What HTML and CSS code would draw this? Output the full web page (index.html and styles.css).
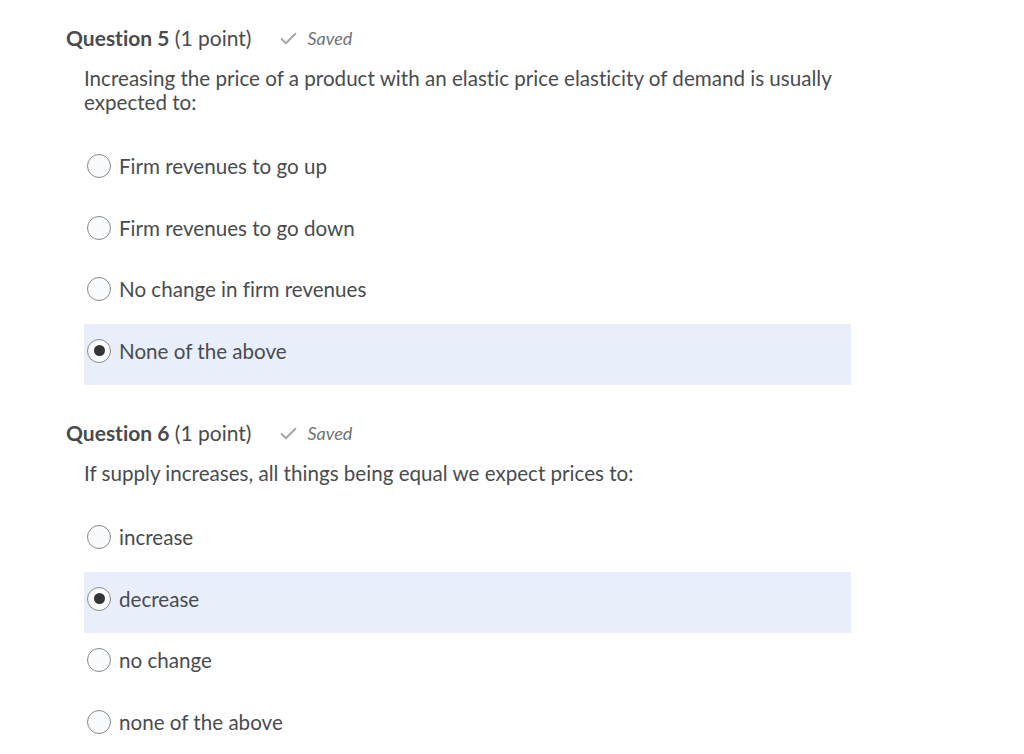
FILE: index.html
```html
<!DOCTYPE html>
<html lang="en">
<head>
<meta charset="utf-8">
<title>Quiz</title>
<link rel="stylesheet" href="styles.css">
</head>
<body>
<main class="quiz">
  <section class="question">
    <h2 class="q-head"><span class="q-title"><b>Question 5</b> (1 point)</span><span class="saved"><svg class="check" viewBox="0 0 16 16" width="17" height="17"><path d="M1.5 8.5 L5.5 12.5 L14.5 3.5" fill="none" stroke="#a3a6a9" stroke-width="1.8" stroke-linecap="round" stroke-linejoin="round"/></svg><i>Saved</i></span></h2>
    <p class="q-text">Increasing the price of a product with an elastic price elasticity of demand is usually expected to:</p>
    <ul class="options">
      <li class="option"><span class="radio"></span><span class="label">Firm revenues to go up</span></li>
      <li class="option"><span class="radio"></span><span class="label">Firm revenues to go down</span></li>
      <li class="option"><span class="radio"></span><span class="label">No change in firm revenues</span></li>
      <li class="option selected"><span class="radio checked"></span><span class="label">None of the above</span></li>
    </ul>
  </section>
  <section class="question">
    <h2 class="q-head"><span class="q-title"><b>Question 6</b> (1 point)</span><span class="saved"><svg class="check" viewBox="0 0 16 16" width="17" height="17"><path d="M1.5 8.5 L5.5 12.5 L14.5 3.5" fill="none" stroke="#a3a6a9" stroke-width="1.8" stroke-linecap="round" stroke-linejoin="round"/></svg><i>Saved</i></span></h2>
    <p class="q-text">If supply increases, all things being equal we expect prices to:</p>
    <ul class="options">
      <li class="option"><span class="radio"></span><span class="label">increase</span></li>
      <li class="option selected"><span class="radio checked"></span><span class="label">decrease</span></li>
      <li class="option"><span class="radio"></span><span class="label">no change</span></li>
      <li class="option"><span class="radio"></span><span class="label">none of the above</span></li>
    </ul>
  </section>
</main>
</body>
</html>
```

FILE: styles.css
```css
html, body {
  margin: 0;
  padding: 0;
  background: #ffffff;
}
body {
  font-family: Lato, "Open Sans", "Liberation Sans", sans-serif;
  color: #494c4e;
  font-variant-ligatures: none;
}
.quiz {
  padding: 26px 0 0 66px;
  width: 785px;
}
.question + .question {
  margin-top: 36px;
}
.q-head {
  margin: 0;
  display: flex;
  align-items: center;
  height: 24px;
  line-height: 24px;
  font-size: 21px;
  font-weight: 400;
}
.q-head b {
  font-weight: 700;
}
.saved {
  display: inline-flex;
  align-items: center;
  margin-left: 29px;
  color: #6e7376;
  font-size: 18px;
}
.check {
  margin-right: 10px;
}
.q-text {
  margin: 16px 0 0 18px;
  font-size: 20.6px;
  line-height: 24px;
  padding-right: 10px;
}
.options {
  list-style: none;
  margin: 25px 0 0 18px;
  padding: 0;
}
.option {
  height: 61.5px;
  box-sizing: border-box;
  padding: 0 0 7px 3px;
  display: flex;
  align-items: center;
  font-size: 20.6px;
}
.option.selected {
  background: #e8effb;
}
.radio {
  width: 24px;
  height: 24px;
  box-sizing: border-box;
  border: 1px solid #868a8d;
  border-radius: 50%;
  background: #f9fafb;
  display: flex;
  align-items: center;
  justify-content: center;
  flex: none;
}
.radio.checked::after {
  content: "";
  width: 11px;
  height: 11px;
  border-radius: 50%;
  background: #333638;
}
.label {
  margin-left: 8px;
}
```
